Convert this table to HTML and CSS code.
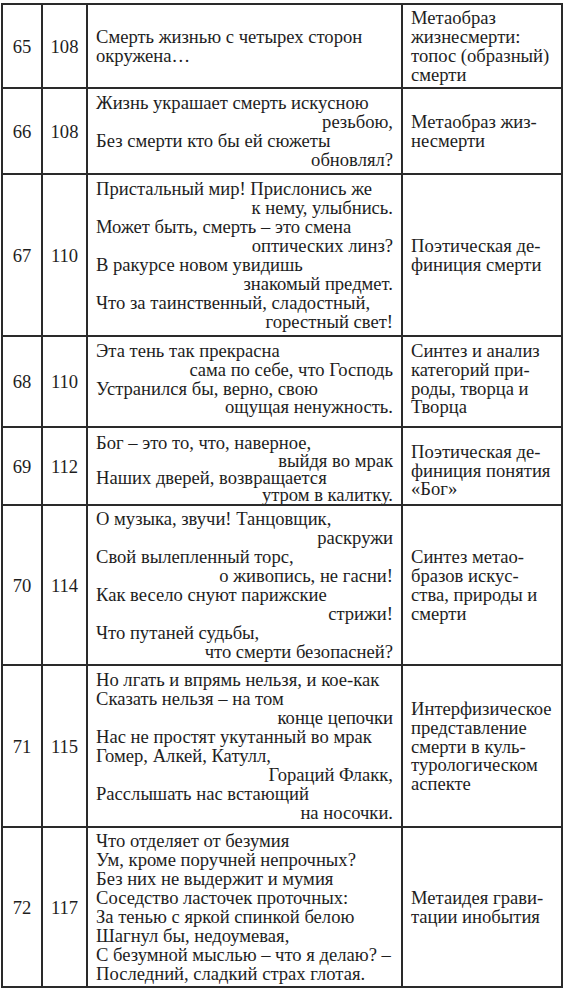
FILE: index.html
```html
<!DOCTYPE html>
<html lang="ru">
<head>
<meta charset="utf-8">
<title>Таблица</title>
<link rel="stylesheet" href="styles.css">
</head>
<body class="page">
<div class="grid">
  <div class="cell num">65</div><div class="cell num">108</div>
  <div class="cell poem"><p class="ln">Смерть жизнью с четырех сторон</p><p class="ln">окружена…</p></div>
  <div class="cell desc"><p class="ln">Метаобраз</p><p class="ln">жизнесмерти:</p><p class="ln">топос (образный)</p><p class="ln">смерти</p></div>

  <div class="cell num">66</div><div class="cell num">108</div>
  <div class="cell poem"><p class="ln">Жизнь украшает смерть искусною</p><p class="ln r">резьбою,</p><p class="ln">Без смерти кто бы ей сюжеты</p><p class="ln r">обновлял?</p></div>
  <div class="cell desc"><p class="ln">Метаобраз жиз-</p><p class="ln">несмерти</p></div>

  <div class="cell num">67</div><div class="cell num">110</div>
  <div class="cell poem"><p class="ln">Пристальный мир! Прислонись же</p><p class="ln r">к нему, улыбнись.</p><p class="ln">Может быть, смерть – это смена</p><p class="ln r">оптических линз?</p><p class="ln">В ракурсе новом увидишь</p><p class="ln r">знакомый предмет.</p><p class="ln">Что за таинственный, сладостный,</p><p class="ln r">горестный свет!</p></div>
  <div class="cell desc"><p class="ln">Поэтическая де-</p><p class="ln">финиция смерти</p></div>

  <div class="cell num">68</div><div class="cell num">110</div>
  <div class="cell poem up"><p class="ln">Эта тень так прекрасна</p><p class="ln r">сама по себе, что Господь</p><p class="ln">Устранился бы, верно, свою</p><p class="ln r">ощущая ненужность.</p></div>
  <div class="cell desc up"><p class="ln">Синтез и анализ</p><p class="ln">категорий при-</p><p class="ln">роды, творца и</p><p class="ln">Творца</p></div>

  <div class="cell num">69</div><div class="cell num">112</div>
  <div class="cell poem down tight"><p class="ln">Бог – это то, что, наверное,</p><p class="ln r">выйдя во мрак</p><p class="ln">Наших дверей, возвращается</p><p class="ln r">утром в калитку.</p></div>
  <div class="cell desc down-s"><p class="ln">Поэтическая де-</p><p class="ln">финиция понятия</p><p class="ln">«Бог»</p></div>

  <div class="cell num">70</div><div class="cell num">114</div>
  <div class="cell poem"><p class="ln">О музыка, звучи! Танцовщик,</p><p class="ln r">раскружи</p><p class="ln">Свой вылепленный торс,</p><p class="ln r">о живопись, не гасни!</p><p class="ln">Как весело снуют парижские</p><p class="ln r">стрижи!</p><p class="ln">Что путаней судьбы,</p><p class="ln r">что смерти безопасней?</p></div>
  <div class="cell desc"><p class="ln">Синтез метао-</p><p class="ln">бразов искус-</p><p class="ln">ства, природы и</p><p class="ln">смерти</p></div>

  <div class="cell num">71</div><div class="cell num">115</div>
  <div class="cell poem"><p class="ln">Но лгать и впрямь нельзя, и кое-как</p><p class="ln">Сказать нельзя – на том</p><p class="ln r">конце цепочки</p><p class="ln">Нас не простят укутанный во мрак</p><p class="ln">Гомер, Алкей, Катулл,</p><p class="ln r">Гораций Флакк,</p><p class="ln">Расслышать нас встающий</p><p class="ln r">на носочки.</p></div>
  <div class="cell desc"><p class="ln">Интерфизическое</p><p class="ln">представление</p><p class="ln">смерти в куль-</p><p class="ln">турологическом</p><p class="ln">аспекте</p></div>

  <div class="cell num">72</div><div class="cell num">117</div>
  <div class="cell poem"><p class="ln">Что отделяет от безумия</p><p class="ln">Ум, кроме поручней непрочных?</p><p class="ln">Без них не выдержит и мумия</p><p class="ln">Соседство ласточек проточных:</p><p class="ln">За тенью с яркой спинкой белою</p><p class="ln">Шагнул бы, недоумевая,</p><p class="ln">С безумной мыслью – что я делаю? –</p><p class="ln">Последний, сладкий страх глотая.</p></div>
  <div class="cell desc"><p class="ln">Метаидея грави-</p><p class="ln">тации инобытия</p></div>
</div>
</body>
</html>
```

FILE: styles.css
```css
html {
  background: #ffffff;
}
.page {
  margin: 0;
  padding: 3px 0 0 1px;
  font-family: "Liberation Serif", "Tinos", "Times New Roman", serif;
  font-size: 18.6px;
  line-height: 1.0215;
  color: #1e1e1e;
}
.grid {
  display: grid;
  width: 562px;
  box-sizing: border-box;
  grid-template-columns: 38px 43px 313px 158px;
  grid-template-rows: 82px 84px 160px 89px 76px 158px 160px 158px;
  gap: 2px;
  padding: 2px;
  background: #2a2a2a;
}
.cell {
  background: #ffffff;
  display: flex;
  flex-direction: column;
  justify-content: center;
  overflow: hidden;
}
.ln {
  margin: 0;
  white-space: nowrap;
}
.num {
  align-items: center;
}
.poem {
  padding: 0 8px;
}
.desc {
  padding: 0 2px 0 8px;
}
.r {
  text-align: right;
}
.up {
  padding-bottom: 6px;
}
.down {
  padding-top: 6px;
}
.tight {
  line-height: 0.941;
}
.down-s {
  padding-top: 8px;
}
```
